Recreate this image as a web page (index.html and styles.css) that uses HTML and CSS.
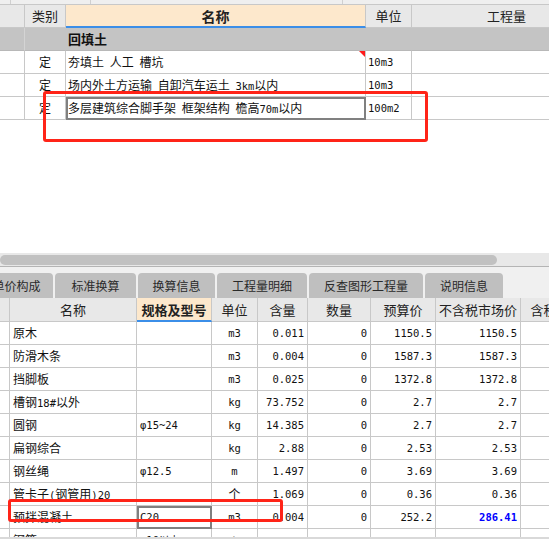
FILE: index.html
```html
<!DOCTYPE html>
<html lang="zh-CN">
<head>
<meta charset="utf-8">
<title>定额</title>
<link rel="stylesheet" href="styles.css">
</head>
<body>
<div class="page">
  <div class="top-pane">
    <div class="strip"><span></span><span></span><span></span><span></span></div>
    <div class="tgrid">
      <div class="th"></div>
      <div class="th">类别</div>
      <div class="th act">名称</div>
      <div class="th">单位</div>
      <div class="th">工程量</div>

      <div class="td g g0"></div>
      <div class="td g"></div>
      <div class="td g b">回填土</div>
      <div class="td g"></div>
      <div class="td g"></div>

      <div class="td"></div>
      <div class="td c">定</div>
      <div class="td tri nm">夯填土 人工 槽坑</div>
      <div class="td n">10m3</div>
      <div class="td"></div>

      <div class="td"></div>
      <div class="td c">定</div>
      <div class="td nm">场内外土方运输 自卸汽车运土 <span class="n">3km</span>以内</div>
      <div class="td n">10m3</div>
      <div class="td"></div>

      <div class="td"></div>
      <div class="td c">定</div>
      <div class="td sel nm">多层建筑综合脚手架 框架结构 檐高<span class="n">70m</span>以内</div>
      <div class="td n">100m2</div>
      <div class="td"></div>
    </div>
  </div>

  <div class="hscroll"><div class="thumb"></div></div>

  <div class="tabs">
    <div class="tab first">单价构成</div>
    <div class="tab w2">标准换算</div>
    <div class="tab w3">换算信息</div>
    <div class="tab w4">工程量明细</div>
    <div class="tab w5">反查图形工程量</div>
    <div class="tab w6">说明信息</div>
  </div>

  <div class="bottom-pane">
    <div class="bgrid">
      <div class="bh"></div>
      <div class="bh">名称</div>
      <div class="bh act">规格及型号</div>
      <div class="bh">单位</div>
      <div class="bh">含量</div>
      <div class="bh">数量</div>
      <div class="bh">预算价</div>
      <div class="bh">不含税市场价</div>
      <div class="bh">含税市场价</div>

      <div></div><div>原木</div><div></div><div class="c n">m3</div><div class="r n">0.011</div><div class="r n">0</div><div class="r n">1150.5</div><div class="r n">1150.5</div><div></div>
      <div></div><div>防滑木条</div><div></div><div class="c n">m3</div><div class="r n">0.004</div><div class="r n">0</div><div class="r n">1587.3</div><div class="r n">1587.3</div><div></div>
      <div></div><div>挡脚板</div><div></div><div class="c n">m3</div><div class="r n">0.025</div><div class="r n">0</div><div class="r n">1372.8</div><div class="r n">1372.8</div><div></div>
      <div></div><div>槽钢<span class="n">18#</span>以外</div><div></div><div class="c n">kg</div><div class="r n">73.752</div><div class="r n">0</div><div class="r n">2.7</div><div class="r n">2.7</div><div></div>
      <div></div><div>圆钢</div><div class="n">φ15~24</div><div class="c n">kg</div><div class="r n">14.385</div><div class="r n">0</div><div class="r n">2.7</div><div class="r n">2.7</div><div></div>
      <div></div><div>扁钢综合</div><div></div><div class="c n">kg</div><div class="r n">2.88</div><div class="r n">0</div><div class="r n">2.53</div><div class="r n">2.53</div><div></div>
      <div></div><div>钢丝绳</div><div class="n">φ12.5</div><div class="c n">m</div><div class="r n">1.497</div><div class="r n">0</div><div class="r n">3.69</div><div class="r n">3.69</div><div></div>
      <div></div><div>管卡子<span class="n">(</span>钢管用<span class="n">)20</span></div><div></div><div class="c">个</div><div class="r n">1.069</div><div class="r n">0</div><div class="r n">0.36</div><div class="r n">0.36</div><div></div>
      <div></div><div>预拌混凝土</div><div class="n sel">C20</div><div class="c n">m3</div><div class="r n">0.004</div><div class="r n">0</div><div class="r n">252.2</div><div class="r n blue">286.41</div><div></div>
      <div></div><div>钢筋</div><div class="n">φ10以内</div><div class="c n">t</div><div class="r n"></div><div class="r n"></div><div class="r n"></div><div class="r n"></div><div></div>
    </div>
  </div>
  <div class="foot"></div>

  <div class="mark mark1"></div>
  <div class="mark mark2"></div>
</div>
</body>
</html>
```

FILE: styles.css
```css
* { box-sizing: border-box; }
html, body { margin: 0; padding: 0; }
body {
  width: 549px;
  height: 539px;
  overflow: hidden;
  background: #ffffff;
  font-family: "Noto Sans CJK SC", "Noto Sans", sans-serif;
  font-size: 12px;
  color: #111111;
}
.page {
  position: relative;
  width: 549px;
  height: 539px;
  display: flex;
  flex-direction: column;
  overflow: hidden;
}

/* ---------- top pane ---------- */
.top-pane {
  flex: none;
  height: 253px;
  overflow: hidden;
}
.strip {
  display: grid;
  grid-template-columns: 11px 80px 252px 300px;
  height: 5px;
  background: #efefef;
  border-bottom: 1px solid #c8c8c8;
}
.strip span { border-right: 1px solid #d0d0d0; }

.tgrid {
  display: grid;
  grid-template-columns: 25px 41px 300px 46px 190px;
  grid-auto-rows: 23px;
  width: 602px;
}
.tgrid > div {
  border-right: 1px solid #c8c8c8;
  border-bottom: 1px solid #c8c8c8;
  line-height: 22px;
  padding: 0 2px;
  white-space: nowrap;
  overflow: hidden;
}
.tgrid > .th {
  background: #e8e8e8;
  text-align: center;
  font-size: 13px;
  color: #222222;
}
.tgrid > .th.act,
.bgrid > .bh.act {
  background: #fde8cc;
  font-weight: bold;
  border-bottom: 2px solid #3b8ee8;
}
.tgrid > .th.act { font-size: 14px; }
.tgrid > .g {
  background: #c4c4c4;
  border-right-color: #c4c4c4;
  border-bottom-color: #b8b8b8;
}
.tgrid > .g0 { border-right-color: #d4d4d4; }
.nm { word-spacing: 3px; }
.b { font-weight: bold; font-size: 13px; }
.c { text-align: center; }
.r { text-align: right; }
.n {
  font-family: "DejaVu Sans Mono", "Liberation Mono", monospace;
  font-size: 10.5px;
  word-spacing: 0;
}
.tri { position: relative; }
.tri::after {
  content: "";
  position: absolute;
  right: 0;
  top: 0;
  border-top: 6px solid #ff1a1a;
  border-left: 6px solid transparent;
}
.sel {
  outline: 2px solid #808080;
  outline-offset: -2px;
}

/* ---------- scrollbar ---------- */
.hscroll {
  flex: none;
  height: 14px;
  background: #e8e8e8;
  border-bottom: 1px solid #b4b4b4;
  padding-top: 2px;
}
.thumb {
  width: 497px;
  height: 10px;
  border-radius: 5px;
  background: #c1c1c1;
}

/* ---------- tabs ---------- */
.tabs {
  flex: none;
  height: 31px;
  background: #f0f0f0;
  display: flex;
  align-items: flex-end;
  gap: 2px;
}
.tab {
  flex: none;
  height: 25px;
  line-height: 25px;
  background: #bfbfbf;
  border-radius: 4px 4px 0 0;
  text-align: center;
  color: #2a2a2a;
  font-size: 12px;
  white-space: nowrap;
}
.tab.first { width: 73px; margin-left: -20px; }
.tab.w2 { width: 81px; }
.tab.w3 { width: 77px; }
.tab.w4 { width: 90px; }
.tab.w5 { width: 114px; }
.tab.w6 { width: 78px; }

/* ---------- bottom pane ---------- */
.bottom-pane {
  flex: none;
  height: 239px;
  overflow: hidden;
}
.bgrid {
  display: grid;
  grid-template-columns: 10px 127px 75px 46px 50px 63px 65px 85px 85px;
  grid-template-rows: 24px;
  grid-auto-rows: 23px;
  width: 606px;
}
.bgrid > div {
  border-right: 1px solid #c8c8c8;
  border-bottom: 1px solid #c8c8c8;
  line-height: 22px;
  padding: 0 3px;
  white-space: nowrap;
  overflow: hidden;
}
.bgrid > .bh {
  background: #e8e8e8;
  text-align: center;
  font-size: 13px;
  line-height: 23px;
  color: #222222;
  padding: 0 1px;
}
.blue { color: #0000ff; font-weight: bold; }

.foot {
  flex: none;
  height: 2px;
  background: #d9d9d9;
}

/* ---------- annotation marks ---------- */
.mark {
  position: absolute;
  border: 3px solid #ff2418;
  border-radius: 3px;
}
.mark1 { left: 43px; top: 91px; width: 385px; height: 51px; }
.mark2 { left: 8px; top: 499px; width: 275px; height: 23px; }
```
